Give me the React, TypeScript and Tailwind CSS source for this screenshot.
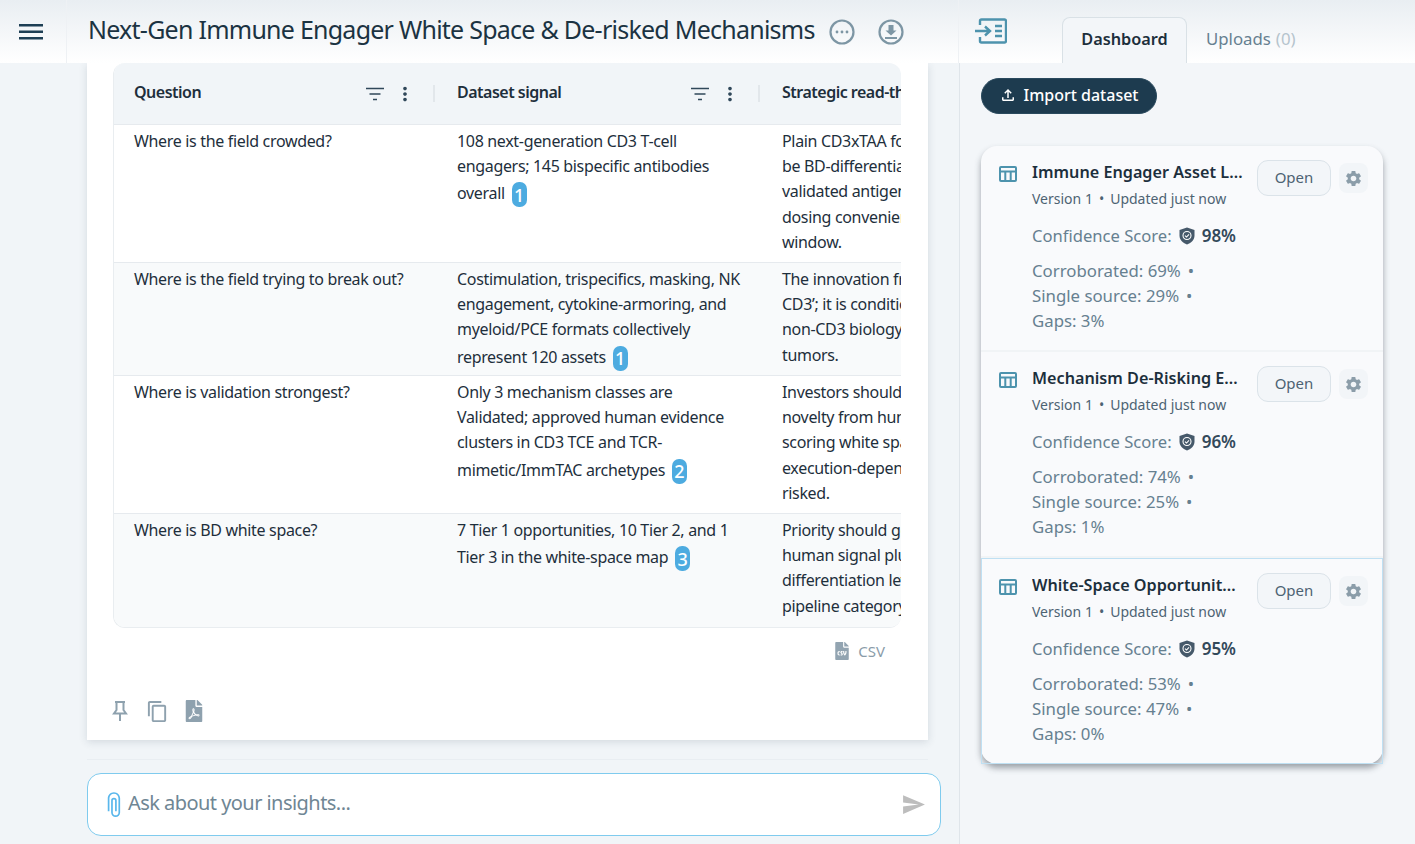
import { MdMoreVert, MdOutlineContentCopy, MdSend, MdSettings, MdOutlineFileUpload, MdAttachFile } from 'react-icons/md';
import { FaFilePdf, FaFileCsv } from 'react-icons/fa';
import type { ReactNode } from 'react';

const datasets = [
  { title: 'Immune Engager Asset Landscape', score: '98%', corroborated: '69%', single: '29%', gaps: '3%' },
  { title: 'Mechanism De-Risking Evidence', score: '96%', corroborated: '74%', single: '25%', gaps: '1%' },
  { title: 'White-Space Opportunity Map', score: '95%', corroborated: '53%', single: '47%', gaps: '0%' },
];

function Badge({ n }: { n: number }) {
  return (
    <span className="mt-[3px] ml-[7px] inline-flex h-[25px] w-[15px] items-center justify-center rounded-[7px] bg-[#4dabe0] align-[-3px] text-[18px] leading-none font-medium tracking-normal text-white">
      {n}
    </span>
  );
}

function FilterIcon() {
  return (
    <svg width="18" height="14" viewBox="0 0 18 14" className="text-[#30485a]">
      <path d="M0 1.500h18M3.500 7h11M7 12.500h4" stroke="currentColor" strokeWidth="1.400" fill="none" />
    </svg>
  );
}

function HeaderCell({ label, width, divider }: { label: string; width: string; divider?: boolean }) {
  return (
    <div className={`flex h-full shrink-0 items-center pr-[2px] pl-[20px] ${width}`}>
      <span className="flex-1 pb-[3px] text-[16px] font-semibold tracking-[-0.5px] text-[#1e2f3c]">{label}</span>
      <FilterIcon />
      <MdMoreVert className="ml-[10px] text-[22px] text-[#30485a]" />
      {divider && <span className="ml-[17px] h-[17px] w-[2px] bg-[#e2e7eb]" />}
    </div>
  );
}

function Cell({ children, width, last }: { children: ReactNode; width: string; last?: boolean }) {
  return (
    <div className={`shrink-0 pt-[4px] pl-[20px] ${width} ${last ? 'whitespace-nowrap' : 'pr-[18px]'}`}>
      {children}
    </div>
  );
}

function Row({ h, shaded, children }: { h: string; shaded?: boolean; children: ReactNode }) {
  return (
    <div className={`flex border-t border-[#e6eaee] leading-[25.2px] ${h} ${shaded ? 'bg-[#f8fafb]' : 'bg-white'}`}>
      {children}
    </div>
  );
}

function Lines({ items }: { items: string[] }) {
  return (
    <>
      {items.map((t) => (
        <div key={t}>{t}</div>
      ))}
    </>
  );
}

function DatasetTable() {
  const col1 = 'w-[323px]';
  const col2 = 'w-[325px]';
  const col3 = 'w-[324px]';
  return (
    <div className="w-[788px] overflow-hidden rounded-xl border-b border-l border-[#e9edf0] text-[16px] tracking-[-0.33px] text-[#1e2f3c]">
      <div className="w-[1000px]">
        <div className="flex h-[61px] bg-[#f1f5f8]">
          <HeaderCell label="Question" width={col1} divider />
          <HeaderCell label="Dataset signal" width={col2} divider />
          <HeaderCell label="Strategic read-through" width={col3} />
        </div>
        <Row h="h-[138px]">
          <Cell width={col1}>Where is the field crowded?</Cell>
          <Cell width={col2}>
            108 next-generation CD3 T-cell engagers; 145 bispecific antibodies overall
            <Badge n={1} />
          </Cell>
          <Cell width={col3} last>
            <Lines items={['Plain CD3xTAA for', 'be BD-differentiated', 'validated antigen', 'dosing convenience', 'window.']} />
          </Cell>
        </Row>
        <Row h="h-[113px]" shaded>
          <Cell width={col1}>Where is the field trying to break out?</Cell>
          <Cell width={col2}>
            Costimulation, trispecifics, masking, NK engagement, cytokine-armoring, and myeloid/PCE formats collectively represent 120 assets
            <Badge n={1} />
          </Cell>
          <Cell width={col3} last>
            <Lines items={['The innovation frontier', 'CD3’; it is conditional', 'non-CD3 biology', 'tumors.']} />
          </Cell>
        </Row>
        <Row h="h-[138px]">
          <Cell width={col1}>Where is validation strongest?</Cell>
          <Cell width={col2}>
            Only 3 mechanism classes are Validated; approved human evidence clusters in CD3 TCE and TCR-mimetic/ImmTAC archetypes
            <Badge n={2} />
          </Cell>
          <Cell width={col3} last>
            <Lines items={['Investors should', 'novelty from human', 'scoring white space', 'execution-dependent', 'risked.']} />
          </Cell>
        </Row>
        <Row h="h-[114px]" shaded>
          <Cell width={col1}>Where is BD white space?</Cell>
          <Cell width={col2}>
            7 Tier 1 opportunities, 10 Tier 2, and 1 Tier 3 in the white-space map
            <Badge n={3} />
          </Cell>
          <Cell width={col3} last>
            <Lines items={['Priority should go', 'human signal plus', 'differentiation level', 'pipeline category']} />
          </Cell>
        </Row>
      </div>
    </div>
  );
}

function TableIcon() {
  return (
    <svg width="18" height="16" viewBox="0 0 18 16" fill="none" stroke="#4d93ad" strokeWidth="2" className="mt-[6px] shrink-0">
      <rect x="1" y="1" width="16" height="14" rx="1" />
      <path d="M1 5.500h16M6.300 5.500V15M11.700 5.500V15" />
    </svg>
  );
}

function ShieldIcon() {
  return (
    <svg width="16" height="18" viewBox="0 0 16 18" className="mx-[7px]">
      <path d="M8 0.500 15.500 3v5.600c0 4.200-3 7.500-7.500 8.900C3.500 16.100.5 12.800.5 8.600V3Z" fill="#46596a" />
      <circle cx="8" cy="8.500" r="4" fill="none" stroke="#fff" strokeWidth="1.100" />
      <path d="M6 8.600l1.500 1.400 2.500-2.700" fill="none" stroke="#fff" strokeWidth="1.100" />
    </svg>
  );
}

function DatasetItem({ d, selected }: { d: (typeof datasets)[number]; selected?: boolean }) {
  return (
    <div
      className={`flex h-[206px] ${selected ? 'border border-[#bfe0f3] pt-[14px] pr-[14px] pl-[17px]' : 'border-b-2 border-[#f1f4f6] pt-[14px] pr-[15px] pl-[18px]'}`}
    >
      <TableIcon />
      <div className="ml-[15px] min-w-0 flex-1">
        <div className="flex">
          <div className="w-[225px]">
            <div className="w-[211px] truncate text-[16.2px] leading-[24px] font-semibold text-[#1c2f3c]">{d.title}</div>
            <div className="mt-[5px] text-[14px] leading-[20px] text-[#4d6373]">
              Version 1<span className="mx-[6px]">•</span>Updated just now
            </div>
          </div>
          <div className="flex h-[36px] w-[74px] items-center justify-center rounded-[11px] border border-[#dbe3e9] bg-[#f3f6f9] pb-[2px] text-[15px] text-[#4d6373]">
            Open
          </div>
          <div className="mt-[3px] ml-[8px] flex h-[30px] w-[29px] items-center justify-center rounded-lg bg-[#f2f5f8]">
            <MdSettings className="text-[19px] text-[#8b9da9]" />
          </div>
        </div>
        <div className="mt-[14px] flex items-center text-[16.6px] leading-[25px] text-[#668090]">
          Confidence Score:
          <ShieldIcon />
          <span className="text-[17px] font-semibold text-[#33495a]">{d.score}</span>
        </div>
        <div className="mt-[10px] text-[16.8px] leading-[25px] text-[#668090]">
          <div>
            Corroborated: {d.corroborated}
            <span className="ml-[7px]">•</span>
          </div>
          <div>
            Single source: {d.single}
            <span className="ml-[7px]">•</span>
          </div>
          <div>Gaps: {d.gaps}</div>
        </div>
      </div>
    </div>
  );
}

export default function App() {
  return (
    <div className="flex h-screen flex-col overflow-hidden bg-[#f1f5f8] font-['Noto_Sans',sans-serif]">
      <header className="z-10 flex h-[63px] shrink-0 bg-gradient-to-b from-[#e9eef2] to-white">
        <div className="flex w-[67px] items-center border-r border-[#eef1f4] pl-[19px]">
          <svg width="24" height="16" viewBox="0 0 24 16" fill="#1d3f54">
            <rect width="24" height="2.500" y="0" />
            <rect width="24" height="2.500" y="6.500" />
            <rect width="24" height="2.500" y="13" />
          </svg>
        </div>
        <div className="flex w-[892px] items-center border-r border-[#eef1f4] pl-[21px]">
          <h1 className="mb-[5px] text-[25px] leading-none font-normal tracking-[-0.75px] text-[#1b3342]">
            Next-Gen Immune Engager White Space &amp; De-risked Mechanisms
          </h1>
          <svg width="26" height="26" viewBox="0 0 26 26" fill="none" className="ml-[14px] text-[#7d96a4]">
            <circle cx="13" cy="13" r="11.500" stroke="currentColor" strokeWidth="2.200" />
            <circle cx="8" cy="13" r="1.400" fill="currentColor" />
            <circle cx="13" cy="13" r="1.400" fill="currentColor" />
            <circle cx="18" cy="13" r="1.400" fill="currentColor" />
          </svg>
          <svg width="26" height="26" viewBox="0 0 26 26" fill="none" className="ml-[23px] text-[#7d96a4]">
            <circle cx="13" cy="13" r="11.500" stroke="currentColor" strokeWidth="2.200" />
            <path d="M10.500 6h5v5.500h3L13 16.500 7.500 11.500h3Z" fill="currentColor" />
            <rect x="7" y="18" width="12" height="2" fill="currentColor" />
          </svg>
        </div>
        <div className="flex flex-1 items-start">
          <svg width="32" height="27" viewBox="0 0 32 27" fill="none" stroke="#4d93ad" strokeWidth="2.400" className="mt-[18px] ml-[16px]">
            <path d="M5 7V3a1.500 1.500 0 0 1 1.500-1.500h23A1.500 1.500 0 0 1 31 3v20a1.500 1.500 0 0 1-1.500 1.500h-23A1.500 1.500 0 0 1 5 23v-4" />
            <path d="M0 13h14M10 8.500l5 4.500-5 4.500M20 8h7M20 13h7M20 18h7" />
          </svg>
          <div className="mt-[17px] ml-[55px] flex h-[46px] w-[125px] items-center justify-center rounded-t-lg border border-b-0 border-[#d9e1e6] bg-[#f3f6f9] pb-[2px] text-[16.3px] font-semibold text-[#1c2f3c]">
            Dashboard
          </div>
          <div className="mt-[17px] ml-[19px] flex h-[46px] items-center pb-[2px] text-[16.8px] text-[#668090]">
            Uploads<span className="ml-[5px] text-[#b5c4cd]">(0)</span>
          </div>
        </div>
      </header>

      <div className="flex min-h-0 flex-1">
        <main className="flex w-[959px] shrink-0 flex-col pl-[87px]">
          <div className="h-[697px] w-[841px] border-b border-[#e9eef2]">
            <section className="flex h-[677px] flex-col bg-white pl-[26px] shadow-[0_2px_8px_rgba(40,60,80,0.15)]">
              <DatasetTable />
              <div className="mt-[12px] flex w-[772px] items-center justify-end text-[15px] text-[#8a9ca9]">
                <FaFileCsv className="mr-[7px] text-[18px] text-[#92a4b1]" />
                CSV
              </div>
              <div className="mt-[37px] -ml-[1px] flex items-center">
                <svg width="16" height="20" viewBox="0 0 16 20" fill="none" stroke="#8ea1ae" strokeWidth="2">
                  <path d="M3 1h10M4.500 1v8L2 12.500h12L11.500 9V1M8 12.500V20" />
                </svg>
                <MdOutlineContentCopy className="ml-[18px] text-[23px] text-[#8ea1ae]" />
                <FaFilePdf className="ml-[14px] text-[22px] text-[#8ea1ae]" />
              </div>
            </section>
          </div>
          <div className="mt-[13px] flex h-[63px] w-[854px] items-center rounded-[14px] border-[1.5px] border-[#7fcbee] bg-white pr-[14px] pl-[13px]">
            <MdAttachFile className="rotate-180 text-[27px] text-[#59b7ec]" />
            <span className="flex-1 pb-[3px] text-[20px] tracking-[-0.55px] text-[#6f8694]">Ask about your insights...</span>
            <MdSend className="text-[25px] text-[#bdbdbd]" />
          </div>
        </main>

        <aside className="flex-1 border-l border-[#dfe5ea] bg-[#f3f6f9] pt-[15px] pl-[21px]">
          <button className="flex h-[36px] w-[176px] items-center justify-center rounded-full border border-[#2a4a5e] bg-[#1d3b4f] pb-[2px] text-[16px] font-medium text-white">
            <MdOutlineFileUpload className="mr-[6px] text-[18px]" />
            Import dataset
          </button>
          <div className="mt-[32px] w-[402px] rounded-2xl bg-[#f9fafc] shadow-[0_4px_6px_rgba(50,60,70,0.45)]">
            {datasets.map((d, i) => (
              <DatasetItem key={d.title} d={d} selected={i === 2} />
            ))}
          </div>
        </aside>
      </div>
    </div>
  );
}
